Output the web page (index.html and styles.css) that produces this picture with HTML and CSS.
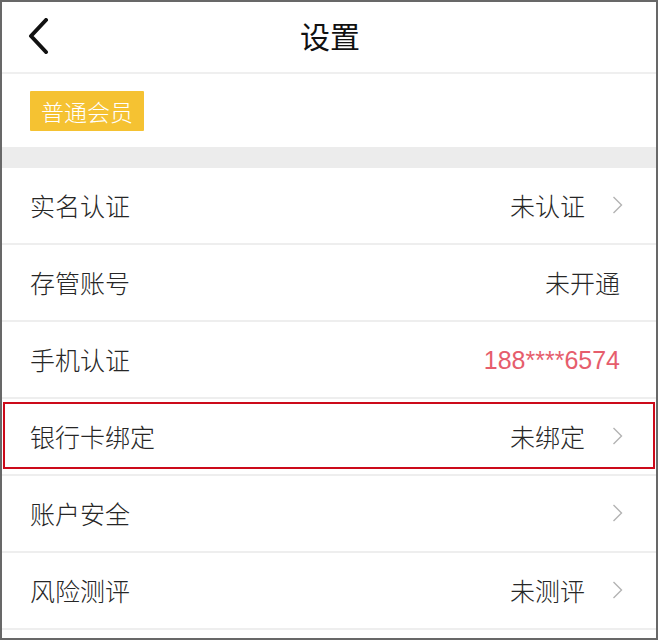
FILE: index.html
```html
<!DOCTYPE html>
<html lang="zh-CN">
<head>
<meta charset="utf-8">
<title>设置</title>
<link rel="stylesheet" href="styles.css">
</head>
<body>
<div class="frame">
  <header class="topbar">
    <span class="back">
      <svg width="22" height="36" viewBox="0 0 22 36"><path d="M19 2 L4 18 L19 34" fill="none" stroke="#111" stroke-width="4" stroke-linecap="round" stroke-linejoin="round"/></svg>
    </span>
    <h1 class="title">设置</h1>
  </header>
  <section class="member">
    <span class="badge">普通会员</span>
  </section>
  <div class="gap"></div>
  <ul class="list">
    <li class="row"><span class="label">实名认证</span><span class="value">未认证</span><span class="chev"><svg width="11" height="18" viewBox="0 0 11 18"><path d="M1.5 1 L9.5 9 L1.5 17" fill="none" stroke="#b3b3b3" stroke-width="1.4"/></svg></span></li>
    <li class="row"><span class="label">存管账号</span><span class="value">未开通</span></li>
    <li class="row"><span class="label">手机认证</span><span class="value phone">188****6574</span></li>
    <li class="row marked"><span class="label">银行卡绑定</span><span class="value">未绑定</span><span class="chev"><svg width="11" height="18" viewBox="0 0 11 18"><path d="M1.5 1 L9.5 9 L1.5 17" fill="none" stroke="#b3b3b3" stroke-width="1.4"/></svg></span><span class="highlight"></span></li>
    <li class="row"><span class="label">账户安全</span><span class="value"></span><span class="chev"><svg width="11" height="18" viewBox="0 0 11 18"><path d="M1.5 1 L9.5 9 L1.5 17" fill="none" stroke="#b3b3b3" stroke-width="1.4"/></svg></span></li>
    <li class="row"><span class="label">风险测评</span><span class="value">未测评</span><span class="chev"><svg width="11" height="18" viewBox="0 0 11 18"><path d="M1.5 1 L9.5 9 L1.5 17" fill="none" stroke="#b3b3b3" stroke-width="1.4"/></svg></span></li>
  </ul>
</div>
</body>
</html>
```
FILE: styles.css
```css
* { box-sizing: border-box; }
html, body { margin: 0; padding: 0; }
body {
  width: 658px;
  height: 640px;
  overflow: hidden;
  background: #fff;
  font-family: "Noto Sans CJK SC", "Noto Sans", sans-serif;
  color: #333;
}
.frame {
  width: 658px;
  height: 640px;
  border: 2px solid #686868;
  background: #fff;
  overflow: hidden;
}
.topbar {
  position: relative;
  height: 72px;
  display: flex;
  align-items: center;
  justify-content: center;
  border-bottom: 2px solid #efefef;
  padding-bottom: 5px;
}
.back {
  position: absolute;
  left: 25px;
  top: 16px;
  display: flex;
}
.title {
  margin: 0;
  font-size: 30px;
  font-weight: 400;
  color: #111;
  line-height: 1;
  padding-left: 2px;
}
.member {
  height: 73px;
  display: flex;
  align-items: center;
  padding-left: 28px;
  padding-bottom: 0;
}
.badge {
  background: #f5c232;
  color: #fff;
  font-size: 23px;
  font-weight: 300;
  line-height: 40px;
  height: 40px;
  padding: 0 11px 0 11px;
  border-radius: 1px;
}
.gap {
  height: 21px;
  background: #ececec;
}
.list {
  list-style: none;
  margin: 0;
  padding: 0;
}
.row {
  position: relative;
  height: 77px;
  display: flex;
  align-items: center;
  padding: 0 33px 2px 28px;
  border-bottom: 2px solid #eeeeee;
  font-size: 25px;
  font-weight: 300;
}
.label { flex: 1; color: #262626; }
.value { color: #262626; }
.phone {
  font-family: "Liberation Sans", Arial, sans-serif;
  color: #e65d6c;
  font-size: 25px;
  font-weight: 400;
  position: relative;
  top: 2px;
}
.chev {
  display: flex;
  margin-left: 27px;
}
.row:not(:has(.chev)) { padding-right: 36px; }
.highlight {
  position: absolute;
  left: 1px;
  right: 1px;
  top: 3px;
  height: 67px;
  border: 2px solid #cc0a1a;
  pointer-events: none;
}
```
